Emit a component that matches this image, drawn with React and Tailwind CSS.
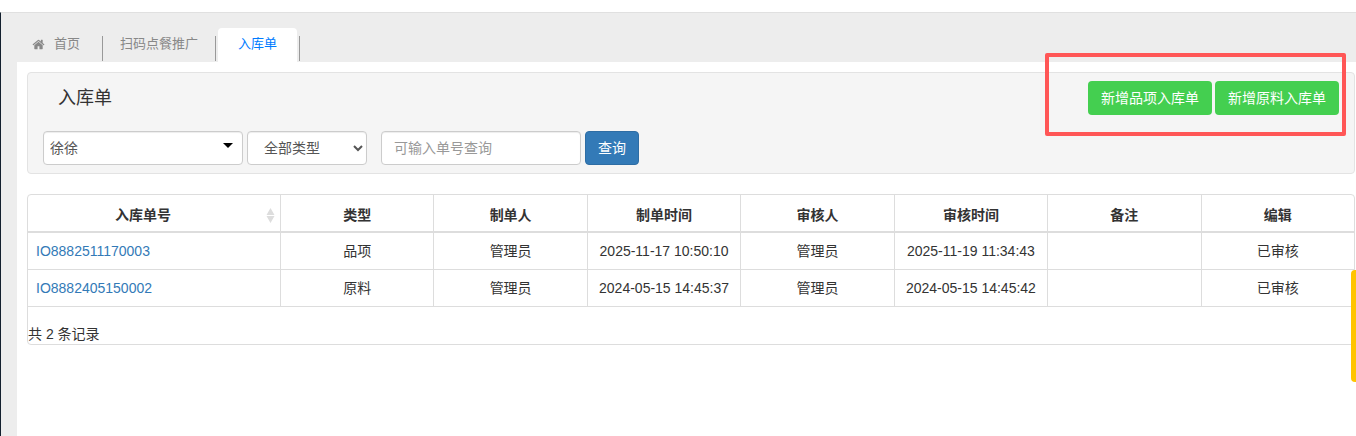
import { useState } from "react";

const FONT = "font-['Liberation_Sans','Noto_Sans_CJK_SC',sans-serif]";

const HEADERS = [
  "类型",
  "制单人",
  "制单时间",
  "审核人",
  "审核时间",
  "备注",
  "编辑",
];

const ROWS = [
  {
    id: "IO8882511170003",
    type: "品项",
    creator: "管理员",
    createdAt: "2025-11-17 10:50:10",
    auditor: "管理员",
    auditedAt: "2025-11-19 11:34:43",
    remark: "",
    status: "已审核",
  },
  {
    id: "IO8882405150002",
    type: "原料",
    creator: "管理员",
    createdAt: "2024-05-15 14:45:37",
    auditor: "管理员",
    auditedAt: "2024-05-15 14:45:42",
    remark: "",
    status: "已审核",
  },
];

const control =
  "h-[34px] rounded border border-[#ccc] bg-white text-sm text-[#555] shadow-[inset_0_1px_1px_rgba(0,0,0,0.075)]";

function HomeIcon({ className }) {
  return (
    <svg className={className} viewBox="0 0 1792 1792" fill="currentColor">
      <path d="M1472 992v480q0 26-19 45t-45 19h-384v-384h-256v384h-384q-26 0-45-19t-19-45v-480q0-1 .5-3t.5-3l575-474 575 474q1 2 1 6zm223-69l-62 74q-8 9-21 11h-3q-13 0-21-7l-692-577-692 577q-12 8-24 7-13-2-21-11l-62-74q-8-10-7-23.500t11-21.500l719-599q32-26 76-26t76 26l244 204v-195q0-14 9-23t23-9h192q14 0 23 9t9 23v408l219 182q10 8 11 21.500t-7 23.500z" />
    </svg>
  );
}

function Tabs() {
  return (
    <nav className="flex h-[49px] items-end pl-[15px] text-[13px] text-[#888]">
      <a
        href="#home"
        className="flex h-[34px] items-center pr-[22px] pb-[2px]"
      >
        <HomeIcon className="mr-[9px] size-[13px]" />
        首页
      </a>
      <span className="mb-px h-[25px] w-px bg-[#999]" />
      <a href="#promo" className="flex h-[34px] items-center px-[17px] pb-[2px]">
        扫码点餐推广
      </a>
      <span className="mb-px h-[25px] w-px bg-[#999]" />
      <a
        href="#stock-in"
        className="mx-[2px] flex h-[34px] items-center rounded-t bg-white px-5 pb-[2px] text-[#007bff]"
      >
        入库单
      </a>
      <span className="mb-px h-[25px] w-px bg-[#999]" />
    </nav>
  );
}

function Toolbar() {
  const [keyword, setKeyword] = useState("");

  return (
    <section className="rounded border border-[#e3e3e3] bg-[#f5f5f5] px-[15px] py-2">
      <div className="flex items-center justify-between">
        <h1 className="pl-[15px] text-lg leading-none text-[#333]">入库单</h1>
        <div className="relative flex gap-[3px]">
          <button className="h-[34px] rounded bg-[#44cf50] px-[13px] text-sm text-white">
            新增品项入库单
          </button>
          <button className="h-[34px] rounded bg-[#44cf50] px-[13px] text-sm text-white">
            新增原料入库单
          </button>
          {/* Highlight frame */}
          <div className="pointer-events-none absolute -top-7 -right-[7px] -bottom-[21px] -left-[43px] rounded-xs border-4 border-[#ff5656]" />
        </div>
      </div>

      <form
        className="mt-4 flex items-center gap-1"
        onSubmit={(e) => e.preventDefault()}
      >
        <div className="relative w-[200px]">
          <select
            aria-label="门店"
            className={`${control} w-full appearance-none pl-[6px]`}
          >
            <option>徐徐</option>
          </select>
          <svg
            className="pointer-events-none absolute top-3 right-[10px] h-[5px] w-[10px]"
            viewBox="0 0 10 5"
          >
            <path d="M0 0h10L5 5z" fill="#000" />
          </svg>
        </div>
        <select aria-label="类型" className={`${control} w-[120px] px-3`}>
          <option>全部类型</option>
        </select>
        <input
          aria-label="单号"
          value={keyword}
          onChange={(e) => setKeyword(e.target.value)}
          placeholder="可输入单号查询"
          className={`${control} ml-[10px] w-[200px] px-3 placeholder:text-[#999]`}
        />
        <button className="h-[34px] rounded border border-[#2e6da4] bg-[#337ab7] px-3 text-sm leading-5 text-white">
          查询
        </button>
      </form>
    </section>
  );
}

function OrderTable() {
  const cell =
    "h-[37px] border-b border-l border-[#ddd] px-2 text-center";

  return (
    <section className="mt-5 rounded border border-[#ddd]">
      <table className="w-full table-fixed border-separate border-spacing-0">
        <thead>
          <tr>
            <th className="h-[38px] w-[252px] border-b-2 border-[#ddd] p-0 pt-1">
              <div className="flex items-center gap-2 pr-[5px]">
                <span className="flex-1">入库单号</span>
                <svg className="h-[15px] w-[9px]" viewBox="0 0 9 15" fill="#ddd">
                  <path d="M4.5 0 8.5 7h-8zM.5 8h8l-4 7z" />
                </svg>
              </div>
            </th>
            {HEADERS.map((h) => (
              <th
                key={h}
                className="h-[38px] border-b-2 border-l border-[#ddd] p-0 pt-1"
              >
                {h}
              </th>
            ))}
          </tr>
        </thead>
        <tbody>
          {ROWS.map((row) => (
            <tr key={row.id}>
              <td className="h-[37px] border-b border-[#ddd] px-2 text-left">
                <a href={`#${row.id}`} className="text-[#337ab7]">
                  {row.id}
                </a>
              </td>
              <td className={cell}>{row.type}</td>
              <td className={cell}>{row.creator}</td>
              <td className={cell}>{row.createdAt}</td>
              <td className={cell}>{row.auditor}</td>
              <td className={cell}>{row.auditedAt}</td>
              <td className={cell}>{row.remark}</td>
              <td className={cell}>{row.status}</td>
            </tr>
          ))}
        </tbody>
      </table>
      <p className="pt-[17px] leading-5">共 2 条记录</p>
    </section>
  );
}

export default function App() {
  return (
    <div
      className={`${FONT} flex min-h-screen flex-col bg-white pt-3 text-sm text-[#333]`}
    >
      <div className="flex flex-1 flex-col border-t border-l border-t-[#e0e0e0] border-l-[#13202e] bg-[#ededed] pl-4">
        <Tabs />
        <main className="flex-1 bg-white pt-[10px] pr-px pl-[10px]">
          <Toolbar />
          <OrderTable />
        </main>
      </div>
      {/* Side drawer handle */}
      <button
        aria-label="展开"
        className="fixed top-[270px] right-0 h-28 w-[5px] rounded-l bg-[#ffc400]"
      />
    </div>
  );
}
